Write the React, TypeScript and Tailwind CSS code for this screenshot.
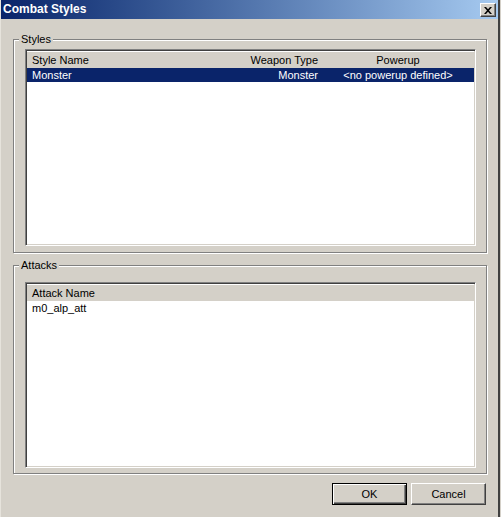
import type { ReactNode } from "react";

const styles = [{ name: "Monster", weapon: "Monster", powerup: "<no powerup defined>" }];
const attacks = ["m0_alp_att"];

function GroupBox({ label, className, children }: { label: string; className: string; children: ReactNode }) {
	return (
		<div className={`relative flex flex-col border border-[#808080] shadow-[inset_1px_1px_0_#fff,1px_1px_0_#fff] ${className}`}>
			<span className="absolute -top-[7px] left-[5px] px-[2px] bg-[#d4d0c8] leading-[13px] text-black">{label}</span>
			{children}
		</div>
	);
}

function ListBox({ children }: { children: ReactNode }) {
	return (
		<div className="flex-1 flex flex-col p-[1px] bg-white border border-t-[#808080] border-l-[#808080] border-b-white border-r-white shadow-[inset_1px_1px_0_#404040,inset_-1px_-1px_0_#d4d0c8]">
			{children}
		</div>
	);
}

function CloseGlyph() {
	return (
		<svg width="8" height="7" viewBox="0 0 8 7" className="block">
			<path d="M0 0h2l2 2.2L6 0h2L5 3.5L8 7H6L4 4.8L2 7H0l3-3.5z" fill="#000" />
		</svg>
	);
}

export default function App() {
	return (
		<div className="w-[501px] h-[517px] flex bg-[#d4d0c8] text-[11px] leading-[14px] text-black font-['Liberation_Sans',Arial,sans-serif]">
			<div className="w-[500px] h-full flex flex-col border-l border-l-[#e6e3dc] border-r-2 border-r-[#404040]">
				{/* caption bar */}
				<div className="h-[19px] flex items-start justify-between pl-[2px] pr-[2px] bg-linear-to-r from-[#0a246a] to-[#a6caf0]">
					<span className="self-center text-[12px] font-bold text-white leading-[15px]">Combat Styles</span>
					<button className="mt-[3px] w-[16px] h-[14px] flex items-center justify-center bg-[#d4d0c8] border border-t-white border-l-white border-b-[#404040] border-r-[#404040] shadow-[inset_-1px_-1px_0_#808080]">
						<CloseGlyph />
					</button>
				</div>

				<div className="flex-1 flex flex-col pl-[12px] pr-[11px]">
					<GroupBox label="Styles" className="mt-[20px] h-[214px] pt-[9px] pl-[11px] pr-[10px] pb-[6px]">
						<ListBox>
							<div className="h-[17px] shrink-0 grid grid-cols-[218px_77px_1fr] items-center bg-[#d4d0c8] shadow-[inset_0_1px_0_#fff]">
								<span className="pl-[5px]">Style Name</span>
								<span className="text-right pr-[4px]">Weapon Type</span>
								<span className="text-center">Powerup</span>
							</div>
							{styles.map((s) => (
								<div key={s.name} className="h-[14px] grid grid-cols-[218px_77px_1fr] items-center bg-[#0a246a] text-white">
									<span className="pl-[5px]">{s.name}</span>
									<span className="text-right pr-[4px]">{s.weapon}</span>
									<span className="text-center">{s.powerup}</span>
								</div>
							))}
						</ListBox>
					</GroupBox>

					<GroupBox label="Attacks" className="mt-[12px] h-[209px] pt-[16px] pl-[11px] pr-[10px] pb-[5px]">
						<ListBox>
							<div className="h-[17px] shrink-0 flex items-center bg-[#d4d0c8] shadow-[inset_0_1px_0_#fff]">
								<span className="pl-[5px]">Attack Name</span>
							</div>
							{attacks.map((a) => (
								<div key={a} className="h-[14px] flex items-center pl-[5px]">{a}</div>
							))}
						</ListBox>
					</GroupBox>

					<div className="mt-[9px] flex justify-end gap-[4px] pr-[1px]">
						<button className="w-[75px] h-[22px] flex items-center justify-center bg-[#d4d0c8] border border-black shadow-[inset_1px_1px_0_#fff,inset_-1px_-1px_0_#404040,inset_-2px_-2px_0_#808080]">OK</button>
						<button className="w-[75px] h-[22px] flex items-center justify-center bg-[#d4d0c8] border border-t-white border-l-white border-b-[#404040] border-r-[#404040] shadow-[inset_-1px_-1px_0_#808080]">Cancel</button>
					</div>
				</div>
			</div>
		</div>
	);
}
